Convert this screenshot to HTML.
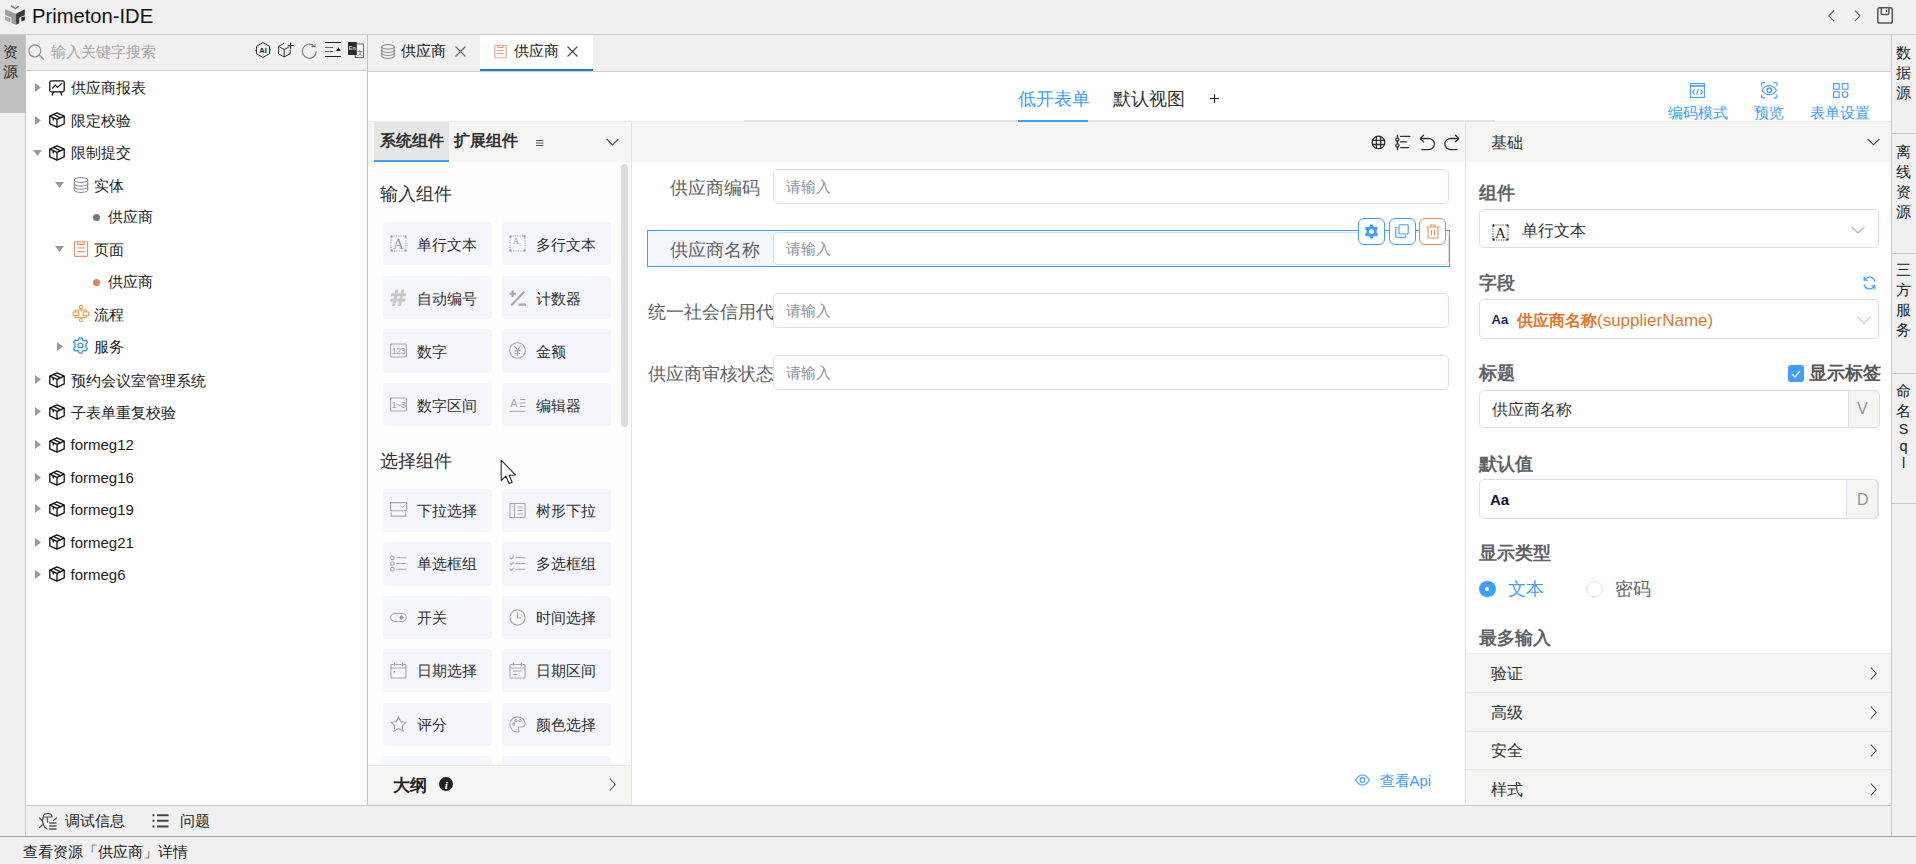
<!DOCTYPE html>
<html><head><meta charset="utf-8">
<style>
*{box-sizing:border-box;margin:0;padding:0}
html,body{width:1916px;height:864px;overflow:hidden;background:#f0f0f0;font-family:"Liberation Sans",sans-serif;color:#222;position:relative}
.a{position:absolute}
.t{position:absolute;white-space:nowrap;line-height:1}
svg{position:absolute;overflow:visible}
.lbl{font-size:17.5px;color:#606266}
.inp{width:676px;border:1px solid #dcdfe6;border-radius:5px;background:#fff}
.ph{font-size:15px;color:#8f9298}
.abtn{width:26.7px;height:26.7px;border:1px solid #409eff;border-radius:6px;background:#fff}
.plbl{font-size:17.5px;font-weight:bold;color:#606266}
.sel{width:400px;border:1px solid #dcdfe6;border-radius:5px;background:#fff}
.addon{width:32px;border:1px solid #dcdfe6;border-radius:0 5px 5px 0;background:#f5f5f4}
.crow{font-size:16.25px;color:#333}
.hbtn{font-size:15px;color:#409eff}
.vtx{left:1891.5px;width:24px;text-align:center;font-size:15px;line-height:20px;color:#222}
.card{width:109px;height:43.3px;background:#f5f6fc;border-radius:4px}
</style></head><body>

<svg width="0" height="0" style="position:absolute">
<defs>
<symbol id="i-chart" viewBox="0 0 16 16"><g fill="none" stroke="#111" stroke-width="1.3"><rect x="0.8" y="0.8" width="14.4" height="11" rx="1.5"/><path d="M3.2 8.6L6.3 5.2L8.6 7.4L12.6 3.4"/><path d="M4.3 11.8L3.2 15.5M11.7 11.8L12.8 15.5"/></g></symbol>
<symbol id="i-cube" viewBox="0 0 16 16"><g fill="none" stroke="#111" stroke-width="1.3" stroke-linejoin="round"><path d="M8 0.8L15.2 4.1V11.9L8 15.2L0.8 11.9V4.1Z"/><path d="M0.8 4.1L8 7.4L15.2 4.1M8 7.4V15.2"/><path d="M4.4 2.4L11.6 5.8M4.2 6V8.6"/></g></symbol>
<symbol id="i-db" viewBox="0 0 16 17"><g fill="none" stroke="#777" stroke-width="1"><ellipse cx="8" cy="3.2" rx="7.2" ry="2.6"/><path d="M0.8 3.2V13.8C0.8 15.2 4 16.4 8 16.4C12 16.4 15.2 15.2 15.2 13.8V3.2"/><path d="M0.8 7C0.8 8.4 4 9.6 8 9.6C12 9.6 15.2 8.4 15.2 7M0.8 10.4C0.8 11.8 4 13 8 13C12 13 15.2 11.8 15.2 10.4"/></g></symbol>
<symbol id="i-page" viewBox="0 0 16 17"><g fill="none" stroke="#e8906a" stroke-width="1.2"><rect x="1" y="0.8" width="14" height="15.6" rx="1.2"/><path d="M4.5 0.8V3.6H11.5V0.8"/><path d="M4 7.4H12M4 11.2H12"/></g></symbol>
<symbol id="i-flow" viewBox="0 0 16 17"><g fill="none" stroke="#e8a35a" stroke-width="1.2"><circle cx="8" cy="2.1" r="1.5"/><circle cx="8" cy="15" r="1.5"/><path d="M8 3.6V5.2M8 11.8V13.5"/><path d="M3 5.2H13V11.8H3Z"/><path d="M0.6 7.6H5.2V10.3H0.6ZM10.8 7.6H15.4V10.3H10.8Z" fill="#fff"/></g></symbol>
<symbol id="i-gear" viewBox="0 0 16 16"><g fill="none" stroke="#3a8ef0" stroke-width="1.2" stroke-linejoin="round"><path d="M6.7 0.8H9.3L9.8 2.7L11.3 3.5L13.2 2.9L14.5 5.1L13.1 6.5V9.5L14.5 10.9L13.2 13.1L11.3 12.5L9.8 13.3L9.3 15.2H6.7L6.2 13.3L4.7 12.5L2.8 13.1L1.5 10.9L2.9 9.5V6.5L1.5 5.1L2.8 2.9L4.7 3.5L6.2 2.7Z"/><circle cx="8" cy="8" r="2.3"/></g></symbol>
</defs></svg>
<!-- title bar -->
<div class="a" style="left:0;top:0;width:1916px;height:34px;background:#f0f0f0"></div>
<div class="a" style="left:0;top:34px;width:1916px;height:1px;background:#cdcdcd"></div>
<div class="t" style="left:32px;top:5.5px;font-size:20.2px;color:#111">Primeton-IDE</div>

<!-- left strip -->
<div class="a" style="left:0;top:35px;width:25px;height:78px;background:#bebebe"></div>
<div class="a" style="left:25px;top:35px;width:1px;height:801px;background:#c8c8c8"></div>
<div class="t" style="left:2.5px;top:42px;font-size:15px;line-height:20px;width:16px;white-space:normal">资源</div>

<!-- left panel -->
<div class="a" style="left:26px;top:70px;width:341px;height:1px;background:#cdcdcd"></div>
<div class="a" style="left:26px;top:71px;width:341px;height:734px;background:#fff"></div>
<div class="a" style="left:367px;top:35px;width:1px;height:770px;background:#c3c3c3"></div>
<div class="t" style="left:51px;top:44px;font-size:15px;color:#a6a6a6">输入关键字搜索</div>
<!-- tree -->
<svg style="left:35px;top:82.9px" width="6" height="9"><path d="M0 0L6 4.5L0 9Z" fill="#999"/></svg>
<svg style="left:49px;top:79.5px" width="16" height="16"><use href="#i-chart"/></svg>
<div class="t" style="left:70.5px;top:80.0px;font-size:15px">供应商报表</div>
<svg style="left:35px;top:115.8px" width="6" height="9"><path d="M0 0L6 4.5L0 9Z" fill="#999"/></svg>
<svg style="left:49px;top:112.4px" width="16" height="16"><use href="#i-cube"/></svg>
<div class="t" style="left:70.5px;top:112.9px;font-size:15px">限定校验</div>
<svg style="left:33.2px;top:149.8px" width="9" height="6"><path d="M0 0L9 0L4.5 6Z" fill="#999"/></svg>
<svg style="left:49px;top:144.8px" width="16" height="16"><use href="#i-cube"/></svg>
<div class="t" style="left:70.5px;top:145.3px;font-size:15px">限制提交</div>
<svg style="left:55.2px;top:182.2px" width="9" height="6"><path d="M0 0L9 0L4.5 6Z" fill="#999"/></svg>
<svg style="left:73px;top:177.2px" width="16" height="16"><use href="#i-db"/></svg>
<div class="t" style="left:93.8px;top:177.7px;font-size:15px">实体</div>
<div class="a" style="left:93px;top:214.0px;width:7px;height:7px;border-radius:50%;background:#777"></div>
<div class="t" style="left:108.3px;top:208.8px;font-size:15px">供应商</div>
<svg style="left:55.2px;top:246.4px" width="9" height="6"><path d="M0 0L9 0L4.5 6Z" fill="#999"/></svg>
<svg style="left:73px;top:241.4px" width="16" height="16"><use href="#i-page"/></svg>
<div class="t" style="left:93.8px;top:241.9px;font-size:15px">页面</div>
<div class="a" style="left:93px;top:279.3px;width:7px;height:7px;border-radius:50%;background:#e0845c"></div>
<div class="t" style="left:108.3px;top:274.3px;font-size:15px">供应商</div>
<svg style="left:72px;top:304px" width="18" height="19"><g fill="none" stroke="#e8a050" stroke-width="1.1"><circle cx="8.9" cy="3" r="1.6"/><circle cx="8.9" cy="16.3" r="1.5"/><path d="M8.9 4.6V6.1M8.9 13.5V14.8"/><rect x="3.2" y="6.1" width="11.1" height="7.4"/><rect x="1.2" y="8" width="5.5" height="3.5" fill="#fff"/><rect x="11.2" y="8" width="5.6" height="3.5" fill="#fff"/></g></svg>
<div class="t" style="left:93.8px;top:307.2px;font-size:15px">流程</div>
<svg style="left:57.3px;top:341.5px" width="6" height="9"><path d="M0 0L6 4.5L0 9Z" fill="#999"/></svg>
<svg style="left:72px;top:337px" width="17" height="17" viewBox="0 0 16 16"><use href="#i-gear"/></svg>
<div class="t" style="left:93.8px;top:338.6px;font-size:15px">服务</div>
<svg style="left:35px;top:375.4px" width="6" height="9"><path d="M0 0L6 4.5L0 9Z" fill="#999"/></svg>
<svg style="left:49px;top:372.0px" width="16" height="16"><use href="#i-cube"/></svg>
<div class="t" style="left:70.5px;top:372.5px;font-size:15px">预约会议室管理系统</div>
<svg style="left:35px;top:407.4px" width="6" height="9"><path d="M0 0L6 4.5L0 9Z" fill="#999"/></svg>
<svg style="left:49px;top:404.0px" width="16" height="16"><use href="#i-cube"/></svg>
<div class="t" style="left:70.5px;top:404.5px;font-size:15px">子表单重复校验</div>
<svg style="left:35px;top:440.1px" width="6" height="9"><path d="M0 0L6 4.5L0 9Z" fill="#999"/></svg>
<svg style="left:49px;top:436.7px" width="16" height="16"><use href="#i-cube"/></svg>
<div class="t" style="left:70.5px;top:437.2px;font-size:15px">formeg12</div>
<svg style="left:35px;top:473.0px" width="6" height="9"><path d="M0 0L6 4.5L0 9Z" fill="#999"/></svg>
<svg style="left:49px;top:469.6px" width="16" height="16"><use href="#i-cube"/></svg>
<div class="t" style="left:70.5px;top:470.1px;font-size:15px">formeg16</div>
<svg style="left:35px;top:504.4px" width="6" height="9"><path d="M0 0L6 4.5L0 9Z" fill="#999"/></svg>
<svg style="left:49px;top:501.0px" width="16" height="16"><use href="#i-cube"/></svg>
<div class="t" style="left:70.5px;top:501.5px;font-size:15px">formeg19</div>
<svg style="left:35px;top:537.8px" width="6" height="9"><path d="M0 0L6 4.5L0 9Z" fill="#999"/></svg>
<svg style="left:49px;top:534.4px" width="16" height="16"><use href="#i-cube"/></svg>
<div class="t" style="left:70.5px;top:534.9px;font-size:15px">formeg21</div>
<svg style="left:35px;top:569.6px" width="6" height="9"><path d="M0 0L6 4.5L0 9Z" fill="#999"/></svg>
<svg style="left:49px;top:566.2px" width="16" height="16"><use href="#i-cube"/></svg>
<div class="t" style="left:70.5px;top:566.7px;font-size:15px">formeg6</div>
<!-- /tree -->

<!-- tabs bar -->
<div class="a" style="left:368px;top:71px;width:1523px;height:1px;background:#cfcfcf"></div>
<div class="a" style="left:480px;top:35px;width:113px;height:36px;background:#fff"></div>
<div class="a" style="left:480px;top:69px;width:113px;height:2px;background:#1a7dd0"></div>
<div class="t" style="left:401px;top:43px;font-size:15px">供应商</div>
<div class="t" style="left:514px;top:43px;font-size:15px">供应商</div>

<!-- form header -->
<div class="a" style="left:368px;top:72px;width:1523px;height:50px;background:#fff"></div>
<div class="a" style="left:368px;top:121px;width:1523px;height:1px;background:#eeeaea"></div>
<div class="a" style="left:743.5px;top:120px;width:751.5px;height:2px;background:#e2e5ee"></div>
<div class="a" style="left:1018px;top:120px;width:70px;height:2px;background:#409eff"></div>
<div class="t" style="left:1018px;top:89.5px;font-size:18px;color:#409eff">低开表单</div>
<div class="t" style="left:1113px;top:89.5px;font-size:18px;color:#303133">默认视图</div>

<!-- component panel -->
<div class="a" style="left:368px;top:122px;width:263px;height:683px;background:#fefefe"></div>
<div class="a" style="left:368px;top:122px;width:263px;height:40px;background:#f5f5f3"></div>
<div class="a" style="left:374px;top:122px;width:75px;height:40px;background:#e6e6e6"></div>
<div class="a" style="left:374px;top:160px;width:75px;height:2px;background:#409eff"></div>
<div class="a" style="left:631px;top:122px;width:1px;height:683px;background:#e4e4e4"></div>
<div class="t" style="left:380px;top:133px;font-size:16px;font-weight:bold;color:#303133">系统组件</div>
<div class="t" style="left:454px;top:133px;font-size:16px;font-weight:bold;color:#303133">扩展组件</div>

<div class="t" style="left:380px;top:185px;font-size:18px;color:#303133">输入组件</div>
<div class="t" style="left:380px;top:451.5px;font-size:18px;color:#303133">选择组件</div>
<div class="a card" style="left:383px;top:222.0px"></div>
<svg style="left:390px;top:235.0px" width="17" height="17" viewBox="0 0 17 17"><rect x="1" y="1" width="15" height="15" fill="none" stroke="#a8a8a8" stroke-width="1.1" stroke-dasharray="1.2 1.2"/><path d="M0.5 0.5h2v2h-2zM14.5 0.5h2v2h-2zM0.5 14.5h2v2h-2zM14.5 14.5h2v2h-2z" fill="#999"/><text x="8.5" y="14.2" font-family="Liberation Serif" font-size="15" fill="#999" text-anchor="middle">A</text></svg>
<div class="t" style="left:417px;top:237.0px;font-size:15px;color:#303133">单行文本</div>
<div class="a card" style="left:502px;top:222.0px"></div>
<svg style="left:509px;top:235.0px" width="17" height="17" viewBox="0 0 17 17"><rect x="1" y="1" width="15" height="15" fill="none" stroke="#a8a8a8" stroke-width="1.1" stroke-dasharray="1.2 1.2"/><path d="M0.5 0.5h2v2h-2zM14.5 0.5h2v2h-2zM0.5 14.5h2v2h-2zM14.5 14.5h2v2h-2z" fill="#999"/><text x="7" y="9.2" font-family="Liberation Serif" font-size="9" fill="#999" text-anchor="middle">A</text></svg>
<div class="t" style="left:536px;top:237.0px;font-size:15px;color:#303133">多行文本</div>
<div class="a card" style="left:383px;top:275.7px"></div>
<svg style="left:390px;top:288.7px" width="17" height="17" viewBox="0 0 17 17"><path fill="#c8c8c8" d="M5.6 0.5H8.6L5.1 17H2.1ZM11.4 0.5H14.4L10.9 17H7.9ZM1.4 4.3H16.6L16 7.3H0.8ZM0.6 9.6H15.8L15.2 12.6H0Z"/></svg>
<div class="t" style="left:417px;top:290.7px;font-size:15px;color:#303133">自动编号</div>
<div class="a card" style="left:502px;top:275.7px"></div>
<svg style="left:509px;top:288.7px" width="17" height="17" viewBox="0 0 17 17"><path d="M0.5 4.8H6.8M3.6 1.6V8M2.2 16.5L15.2 2.8M9.6 15.6H17" stroke="#a8a8a8" stroke-width="2.1" fill="none"/></svg>
<div class="t" style="left:536px;top:290.7px;font-size:15px;color:#303133">计数器</div>
<div class="a card" style="left:383px;top:329.4px"></div>
<svg style="left:390px;top:342.4px" width="17" height="17" viewBox="0 0 17 17"><rect x="0.6" y="2" width="15.8" height="13" rx="1" fill="none" stroke="#a8a8a8" stroke-width="1.1"/><text x="8.5" y="12" font-family="Liberation Sans" font-size="9" fill="#a0a0a0" text-anchor="middle" letter-spacing="-0.3">123</text></svg>
<div class="t" style="left:417px;top:344.4px;font-size:15px;color:#303133">数字</div>
<div class="a card" style="left:502px;top:329.4px"></div>
<svg style="left:509px;top:342.4px" width="17" height="17" viewBox="0 0 17 17"><circle cx="8.5" cy="8.5" r="7.8" fill="none" stroke="#a8a8a8" stroke-width="1.1"/><path d="M5.4 3.8L8.5 8.2L11.6 3.8M8.5 8.2V13.6M5.6 8.9H11.4M5.6 11.2H11.4" fill="none" stroke="#a8a8a8" stroke-width="1.1"/></svg>
<div class="t" style="left:536px;top:344.4px;font-size:15px;color:#303133">金额</div>
<div class="a card" style="left:383px;top:383.1px"></div>
<svg style="left:390px;top:396.1px" width="17" height="17" viewBox="0 0 17 17"><rect x="0.6" y="2" width="15.8" height="13" rx="1" fill="none" stroke="#a8a8a8" stroke-width="1.1"/><text x="8.5" y="12" font-family="Liberation Sans" font-size="9" fill="#a0a0a0" text-anchor="middle" letter-spacing="-0.5">1~3</text></svg>
<div class="t" style="left:417px;top:398.1px;font-size:15px;color:#303133">数字区间</div>
<div class="a card" style="left:502px;top:383.1px"></div>
<svg style="left:509px;top:396.1px" width="17" height="17" viewBox="0 0 17 17"><text x="5" y="11" font-family="Liberation Sans" font-size="11" fill="#aaa" text-anchor="middle">A</text><path d="M0.5 15.2H16.5M11 3.5h5.5M11 7h5.5M11 10.5h5.5" fill="none" stroke="#a8a8a8" stroke-width="1.1"/></svg>
<div class="t" style="left:536px;top:398.1px;font-size:15px;color:#303133">编辑器</div>
<div class="a card" style="left:383px;top:489.0px"></div>
<svg style="left:390px;top:502.0px" width="17" height="17" viewBox="0 0 17 17"><path d="M0.6 0.6h16v8.2H0.6z" fill="none" stroke="#a8a8a8" stroke-width="1.1"/><path d="M10.5 3.6l1.8 1.8l1.8-1.8" fill="none" stroke="#a8a8a8" stroke-width="1"/><path d="M1.2 10.5v3.6h14.6v-3.6" fill="none" stroke="#a8a8a8" stroke-width="1.1"/></svg>
<div class="t" style="left:417px;top:503.0px;font-size:15px;color:#303133">下拉选择</div>
<div class="a card" style="left:502px;top:489.0px"></div>
<svg style="left:509px;top:502.0px" width="17" height="17" viewBox="0 0 17 17"><rect x="1" y="1.5" width="15" height="14" fill="none" stroke="#a8a8a8" stroke-width="1.1"/><path d="M5.5 1.5v14M8.5 5h5M8.5 8.5h5M8.5 12h5M2.8 4.5h1" fill="none" stroke="#a8a8a8" stroke-width="1.1"/></svg>
<div class="t" style="left:536px;top:503.0px;font-size:15px;color:#303133">树形下拉</div>
<div class="a card" style="left:383px;top:542.4px"></div>
<svg style="left:390px;top:555.4px" width="17" height="17" viewBox="0 0 17 17"><circle cx="2.5" cy="2.8" r="1.8" fill="none" stroke="#a8a8a8" stroke-width="1.1"/><circle cx="2.5" cy="8.5" r="1.8" fill="none" stroke="#a8a8a8" stroke-width="1.1"/><circle cx="2.5" cy="14.2" r="1.8" fill="none" stroke="#a8a8a8" stroke-width="1.1"/><path d="M6.5 2.8H16.5M6.5 8.5H16.5M6.5 14.2H16.5" fill="none" stroke="#a8a8a8" stroke-width="1.1"/></svg>
<div class="t" style="left:417px;top:556.4px;font-size:15px;color:#303133">单选框组</div>
<div class="a card" style="left:502px;top:542.4px"></div>
<svg style="left:509px;top:555.4px" width="17" height="17" viewBox="0 0 17 17"><path d="M0.8 2.5l1.5 1.5l2.5-2.5M0.8 8.2l1.5 1.5l2.5-2.5M0.8 13.9l1.5 1.5l2.5-2.5" fill="none" stroke="#a8a8a8" stroke-width="1.1"/><path d="M6.5 2.8H16.5M6.5 8.5H16.5M6.5 14.2H16.5" fill="none" stroke="#a8a8a8" stroke-width="1.1"/></svg>
<div class="t" style="left:536px;top:556.4px;font-size:15px;color:#303133">多选框组</div>
<div class="a card" style="left:383px;top:595.8px"></div>
<svg style="left:390px;top:608.8px" width="17" height="17" viewBox="0 0 17 17"><rect x="0.8" y="4.5" width="15.4" height="8" rx="4" fill="none" stroke="#a8a8a8" stroke-width="1.1"/><circle cx="11.5" cy="8.5" r="2" fill="#999"/></svg>
<div class="t" style="left:417px;top:609.8px;font-size:15px;color:#303133">开关</div>
<div class="a card" style="left:502px;top:595.8px"></div>
<svg style="left:509px;top:608.8px" width="17" height="17" viewBox="0 0 17 17"><circle cx="8.5" cy="8.5" r="7.6" fill="none" stroke="#a8a8a8" stroke-width="1.1"/><path d="M8.5 3.5V9H12" fill="none" stroke="#a8a8a8" stroke-width="1.1"/></svg>
<div class="t" style="left:536px;top:609.8px;font-size:15px;color:#303133">时间选择</div>
<div class="a card" style="left:383px;top:649.2px"></div>
<svg style="left:390px;top:662.2px" width="17" height="17" viewBox="0 0 17 17"><rect x="1" y="2.5" width="15" height="13.5" rx="0.8" fill="none" stroke="#a8a8a8" stroke-width="1.1"/><path d="M1 6H16M4.5 0.8V4M12.5 0.8V4" fill="none" stroke="#a8a8a8" stroke-width="1.1"/><rect x="3.5" y="9" width="1.6" height="1.6" fill="#aaa"/></svg>
<div class="t" style="left:417px;top:663.2px;font-size:15px;color:#303133">日期选择</div>
<div class="a card" style="left:502px;top:649.2px"></div>
<svg style="left:509px;top:662.2px" width="17" height="17" viewBox="0 0 17 17"><rect x="1" y="2.5" width="15" height="13.5" rx="0.8" fill="none" stroke="#a8a8a8" stroke-width="1.1"/><path d="M1 6H16M4.5 0.8V4M12.5 0.8V4M4 9H13M4 12.5H8.5" fill="none" stroke="#a8a8a8" stroke-width="1.1"/></svg>
<div class="t" style="left:536px;top:663.2px;font-size:15px;color:#303133">日期区间</div>
<div class="a card" style="left:383px;top:702.6px"></div>
<svg style="left:390px;top:715.6px" width="17" height="17" viewBox="0 0 17 17"><path d="M8.5 0.9L10.8 5.8L16 6.4L12.1 9.9L13.2 15.2L8.5 12.5L3.8 15.2L4.9 9.9L1 6.4L6.2 5.8Z" fill="none" stroke="#a8a8a8" stroke-width="1.1" stroke-linejoin="round"/></svg>
<div class="t" style="left:417px;top:716.6px;font-size:15px;color:#303133">评分</div>
<div class="a card" style="left:502px;top:702.6px"></div>
<svg style="left:509px;top:715.6px" width="17" height="17" viewBox="0 0 17 17"><path d="M8.5 0.9C4.2 0.9 0.9 4.2 0.9 8.3C0.9 12.6 4.5 16.1 8.6 16.1C9.6 16.1 10.1 15.5 10.1 14.7C10.1 13.7 9.3 13.4 9.3 12.5C9.3 11.6 10 11 10.9 11H12.7C14.7 11 16.1 9.6 16.1 7.6C16.1 3.8 12.7 0.9 8.5 0.9Z" fill="none" stroke="#a8a8a8" stroke-width="1.1"/><circle cx="4.8" cy="8" r="1.1" fill="none" stroke="#a8a8a8" stroke-width="1.1"/><circle cx="7" cy="4.6" r="1.1" fill="none" stroke="#a8a8a8" stroke-width="1.1"/><circle cx="11" cy="4.6" r="1.1" fill="none" stroke="#a8a8a8" stroke-width="1.1"/></svg>
<div class="t" style="left:536px;top:716.6px;font-size:15px;color:#303133">颜色选择</div>
<div class="a card" style="left:383px;top:756.0px"></div>
<div class="a card" style="left:502px;top:756.0px"></div>
<div class="a" style="left:621px;top:164px;width:7px;height:263px;border-radius:4px;background:#dcdde0"></div>
<svg style="left:535.5px;top:140px" width="8" height="6"><path d="M0 0.5H7.5M0 3H7.5M0 5.5H7.5" stroke="#444" stroke-width="0.9"/></svg>
<svg style="left:605.5px;top:138px" width="13" height="8"><path d="M0.5 0.8L6.5 6.8L12.5 0.8" fill="none" stroke="#555" stroke-width="1.2"/></svg>
<div class="a" style="left:368px;top:765px;width:263px;height:40px;background:#f5f5f3;border-top:1px solid #e8eaf0;border-bottom:1px solid #e8eaf0"></div>
<div class="t" style="left:393px;top:777px;font-size:17px;font-weight:bold;color:#222">大纲</div>
<svg style="left:439px;top:777px" width="14" height="14"><circle cx="7" cy="7" r="7" fill="#222"/><text x="7.3" y="11.5" font-family="Liberation Serif" font-style="italic" font-weight="bold" font-size="11" fill="#fff" text-anchor="middle">i</text></svg>
<svg style="left:609px;top:778px" width="7" height="13"><path d="M0.8 0.5L6.2 6.5L0.8 12.5" fill="none" stroke="#555" stroke-width="1.1"/></svg>

<!-- canvas -->
<div class="a" style="left:632px;top:122px;width:833px;height:683px;background:#fff"></div>
<div class="a" style="left:632px;top:122px;width:833px;height:40px;background:#f5f5f3"></div>
<div class="a" style="left:1465px;top:122px;width:1px;height:683px;background:#e4e4e4"></div>


<!-- canvas toolbar icons -->
<svg style="left:1365px;top:130px" width="100" height="26" viewBox="0 0 100 26"><g fill="none" stroke="#333" stroke-width="1.3" stroke-linecap="round" stroke-linejoin="round">
<circle cx="13.5" cy="12.4" r="6.3"/><path d="M7.4 10.3H19.6M7.4 14.5H19.6M11.4 6.4V18.4M15.6 6.4V18.4"/>
<path d="M32.4 5.2V19.8"/><circle cx="32.4" cy="9.4" r="1.6" fill="#f5f5f3"/><circle cx="32.4" cy="15.4" r="1.6" fill="#f5f5f3"/>
<path d="M35.5 6.4H44.8M35.5 11.9H41.2M35.5 17.6H43.6"/>
<path d="M58.5 5.2L55.3 8.5L58.5 11.7"/><path d="M55.5 8.5H63.5C66.8 8.5 69.5 11 69.5 14.1C69.5 17.2 66.8 19.6 63.5 19.6H56.8"/>
<path d="M90.5 5.2L93.7 8.5L90.5 11.7"/><path d="M93.5 8.5H85.8C82.5 8.5 79.8 11 79.8 14.1C79.8 17.2 82.5 19.6 85.8 19.6H92.2"/>
</g></svg>

<!-- fields -->
<div class="t lbl" style="left:670px;top:179.5px">供应商编码</div>
<div class="a inp" style="left:773px;top:169px;height:34.5px"></div>
<div class="t ph" style="left:786px;top:179px">请输入</div>

<div class="a" style="left:647px;top:230px;width:803px;height:37px;border:1px solid #409eff;background:#f4f6fd"></div>
<div class="t lbl" style="left:670px;top:242px">供应商名称</div>
<div class="a inp" style="left:773px;top:231.7px;height:33.8px"></div>
<div class="t ph" style="left:786px;top:241px">请输入</div>

<div class="t lbl" style="left:648px;top:304px">统一社会信用代码</div>
<div class="a inp" style="left:773px;top:293.2px;height:34.4px"></div>
<div class="t ph" style="left:786px;top:303px">请输入</div>

<div class="t lbl" style="left:648px;top:366px">供应商审核状态</div>
<div class="a inp" style="left:773px;top:355px;height:34.7px"></div>
<div class="t ph" style="left:786px;top:365px">请输入</div>

<!-- action buttons -->
<div class="a abtn" style="left:1358px;top:218px"></div>
<div class="a abtn" style="left:1389px;top:218px"></div>
<div class="a abtn" style="left:1419.2px;top:218px;border-color:#e0885a"></div>
<svg style="left:1364px;top:223.5px" width="15" height="15" viewBox="0 0 16 16"><path fill="#409eff" fill-rule="evenodd" d="M6.6 0.5H9.4L9.9 2.6L11.6 3.5L13.6 2.8L15 5.2L13.5 6.6V9.4L15 10.8L13.6 13.2L11.6 12.5L9.9 13.4L9.4 15.5H6.6L6.1 13.4L4.4 12.5L2.4 13.2L1 10.8L2.5 9.4V6.6L1 5.2L2.4 2.8L4.4 3.5L6.1 2.6ZM8 5.3A2.7 2.7 0 1 0 8 10.7A2.7 2.7 0 1 0 8 5.3Z"/></svg>
<svg style="left:1395px;top:224px" width="14" height="14" viewBox="0 0 14 14"><g fill="none" stroke="#409eff" stroke-width="1.1"><rect x="4" y="0.8" width="9.2" height="9.2" rx="1"/><path d="M2.5 3.5H0.8V13.2H10.5V11.5"/></g></svg>
<svg style="left:1425.5px;top:223.5px" width="14" height="15" viewBox="0 0 14 15"><g fill="none" stroke="#e8915f" stroke-width="1.1"><path d="M0.5 3H13.5M4.8 3V1H9.2V3M2 3V14H12V3M5.5 6V11.5M8.5 6V11.5"/></g></svg>

<!-- api link -->
<svg style="left:1355px;top:774px" width="15" height="12" viewBox="0 0 15 12"><g fill="none" stroke="#409eff" stroke-width="1.1"><path d="M0.7 6C2.5 2.8 4.8 1 7.5 1C10.2 1 12.5 2.8 14.3 6C12.5 9.2 10.2 11 7.5 11C4.8 11 2.5 9.2 0.7 6Z"/><circle cx="7.5" cy="6" r="2.4"/></g></svg>
<div class="t" style="left:1379.5px;top:772.5px;font-size:15px;color:#409eff">查看Api</div>

<!-- props panel -->
<div class="a" style="left:1466px;top:122px;width:425px;height:683px;background:#fff"></div>
<div class="a" style="left:1466px;top:122px;width:425px;height:40px;background:#f5f5f3"></div>


<div class="t" style="left:1491px;top:134px;font-size:16.25px;color:#333">基础</div>
<svg style="left:1867px;top:138px" width="13" height="8"><path d="M0.5 0.8L6.5 6.8L12.5 0.8" fill="none" stroke="#444" stroke-width="1.1"/></svg>

<div class="t plbl" style="left:1479px;top:185px">组件</div>
<div class="a sel" style="left:1479px;top:209.4px;height:39.1px"></div>
<svg style="left:1492px;top:224px" width="17" height="17" viewBox="0 0 17 17"><rect x="1" y="1" width="15" height="15" fill="none" stroke="#444" stroke-width="1" stroke-dasharray="1.2 1.2"/><path d="M0.5 0.5h2v2h-2zM14.5 0.5h2v2h-2zM0.5 14.5h2v2h-2zM14.5 14.5h2v2h-2z" fill="#222"/><text x="8.5" y="14.3" font-family="Liberation Serif" font-size="15" fill="#222" text-anchor="middle">A</text></svg>
<div class="t" style="left:1522px;top:221.8px;font-size:16.25px;color:#333">单行文本</div>
<svg style="left:1851px;top:226px" width="14" height="8"><path d="M0.5 0.8L7 7L13.5 0.8" fill="none" stroke="#a8abb2" stroke-width="1.1"/></svg>

<div class="t plbl" style="left:1479px;top:275px">字段</div>
<svg style="left:1862px;top:275.5px" width="15" height="14" viewBox="0 0 15 14"><g fill="none" stroke="#409eff" stroke-width="1.3"><path d="M13 5.5A5.8 5.8 0 0 0 2.5 3.8M2 8.5A5.8 5.8 0 0 0 12.5 10.2"/><path d="M2.2 0.8V4.2H5.6M12.8 13.2V9.8H9.4"/></g></svg>
<div class="a sel" style="left:1479px;top:299.2px;height:39.8px"></div>
<div class="t" style="left:1491.5px;top:313px;font-size:13px;font-weight:bold;color:#1d1d5c">Aa</div>
<div class="t" style="left:1517px;top:311.5px;font-size:16.25px;font-weight:bold;color:#e6772e">供应商名称<span style="font-weight:normal;font-size:17px">(supplierName)</span></div>
<svg style="left:1857px;top:315.5px" width="14" height="8"><path d="M0.5 0.8L7 7L13.5 0.8" fill="none" stroke="#c0c4cc" stroke-width="1.1"/></svg>

<div class="t plbl" style="left:1479px;top:365px">标题</div>
<div class="a" style="left:1787.5px;top:365.3px;width:16.3px;height:16.3px;border-radius:3px;background:#409eff"></div>
<svg style="left:1790.5px;top:369.5px" width="10" height="8"><path d="M1 4L4 7L9 1" fill="none" stroke="#fff" stroke-width="1.3"/></svg>
<div class="t plbl" style="left:1809px;top:365px;color:#555">显示标签</div>
<div class="a sel" style="left:1479px;top:389.7px;height:38.3px"></div>
<div class="a addon" style="left:1847.5px;top:389.7px;height:38.3px"></div>
<div class="t" style="left:1491.5px;top:401px;font-size:16.25px;color:#333">供应商名称</div>
<div class="t" style="left:1857px;top:401px;font-size:16px;color:#909399">V</div>

<div class="t plbl" style="left:1479px;top:456px">默认值</div>
<div class="a sel" style="left:1479px;top:479.4px;height:39.4px"></div>
<div class="a addon" style="left:1846px;top:479.4px;height:39.4px"></div>
<div class="t" style="left:1490px;top:491.5px;font-size:15px;font-weight:bold;color:#111133">Aa</div>
<div class="t" style="left:1857px;top:491.5px;font-size:16px;color:#909399">D</div>

<div class="t plbl" style="left:1479px;top:545px">显示类型</div>
<div class="a" style="left:1479px;top:580.5px;width:16.5px;height:16.5px;border-radius:50%;background:#409eff"></div>
<div class="a" style="left:1485.25px;top:586.75px;width:4px;height:4px;border-radius:50%;background:#fff"></div>
<div class="t" style="left:1508px;top:581px;font-size:17.5px;color:#409eff">文本</div>
<div class="a" style="left:1586px;top:580.5px;width:16.5px;height:16.5px;border-radius:50%;border:1px solid #dcdfe6;background:#fff"></div>
<div class="t" style="left:1615px;top:581px;font-size:17.5px;color:#606266">密码</div>

<div class="t plbl" style="left:1479px;top:630px">最多输入</div>

<div class="a" style="left:1466px;top:653px;width:425px;height:152px;background:#f5f5f3;border-top:1px solid #e6e9f0"></div>
<div class="a" style="left:1466px;top:692px;width:425px;height:1px;background:#e6e9f0"></div>
<div class="a" style="left:1466px;top:730.5px;width:425px;height:1px;background:#e6e9f0"></div>
<div class="a" style="left:1466px;top:769px;width:425px;height:1px;background:#e6e9f0"></div>
<div class="t crow" style="left:1491px;top:665px">验证</div>
<div class="t crow" style="left:1491px;top:703.5px">高级</div>
<div class="t crow" style="left:1491px;top:742px">安全</div>
<div class="t crow" style="left:1491px;top:780.5px">样式</div>
<svg style="left:1870px;top:667px" width="7" height="13"><path d="M0.8 0.5L6.2 6.5L0.8 12.5" fill="none" stroke="#444" stroke-width="1.1"/></svg>
<svg style="left:1870px;top:705.5px" width="7" height="13"><path d="M0.8 0.5L6.2 6.5L0.8 12.5" fill="none" stroke="#444" stroke-width="1.1"/></svg>
<svg style="left:1870px;top:744px" width="7" height="13"><path d="M0.8 0.5L6.2 6.5L0.8 12.5" fill="none" stroke="#444" stroke-width="1.1"/></svg>
<svg style="left:1870px;top:782.5px" width="7" height="13"><path d="M0.8 0.5L6.2 6.5L0.8 12.5" fill="none" stroke="#444" stroke-width="1.1"/></svg>

<!-- right strip -->
<div class="a" style="left:1891px;top:35px;width:1px;height:801px;background:#c8c8c8"></div>

<!-- bottom bar -->
<div class="a" style="left:26px;top:805px;width:1865px;height:1px;background:#c8c8c8"></div>
<div class="a" style="left:0;top:836px;width:1916px;height:1px;background:#a0a0a0"></div>
<div class="t" style="left:65px;top:813px;font-size:15px">调试信息</div>
<div class="t" style="left:180px;top:813px;font-size:15px">问题</div>
<div class="t" style="left:23px;top:844px;font-size:15px">查看资源「供应商」详情</div>


<!-- logo -->
<svg style="left:0;top:0" width="30" height="30" viewBox="0 0 30 30">
<path d="M11 5.6L15.4 8.6L18.9 6.3" fill="none" stroke="#7a7a7a" stroke-width="1.6"/>
<path d="M5.1 9.3L16.1 13.8V24.8L11.4 22.9V17.4L5.1 15Z" fill="#9c9c9c"/>
<path d="M5.1 16.3L10.5 18.3V22.2L5.1 20.1Z" fill="#a6a6a6"/>
<path d="M16.1 13.8L24.8 9.3V15.3L19.3 17.4V22.9L16.1 24.8Z" fill="#3a3a3a"/>
<path d="M21.3 17.6L24.8 16.2V20.2L21.3 21.6Z" fill="#2a2a2a"/>
</svg>
<!-- top right -->
<svg style="left:1828px;top:9.5px" width="7" height="12"><path d="M6 0.5L0.8 5.8L6 11.2" fill="none" stroke="#666" stroke-width="1.1"/></svg>
<svg style="left:1853.5px;top:9.5px" width="7" height="12"><path d="M0.8 0.5L6 5.8L0.8 11.2" fill="none" stroke="#666" stroke-width="1.1"/></svg>
<svg style="left:1876.5px;top:7.2px" width="16" height="17" viewBox="0 0 16 17"><g fill="none" stroke="#555" stroke-width="1.5"><rect x="0.8" y="0.8" width="14.5" height="15.2" rx="1.8"/><path d="M4.3 0.8V6.2C4.3 7 4.8 7.6 5.6 7.6H10.6C11.4 7.6 11.9 7 11.9 6.2V0.8"/></g><path d="M9.6 3V5" stroke="#333" stroke-width="1.2"/></svg>

<!-- search row icons -->
<svg style="left:27.5px;top:43.5px" width="17" height="16" viewBox="0 0 17 16"><g fill="none" stroke="#8a8a8a" stroke-width="1.2"><circle cx="6.8" cy="6.8" r="6"/><path d="M11.2 11.2L16 15.5"/></g></svg>
<svg style="left:255px;top:42px" width="16" height="16" viewBox="0 0 16 16"><g fill="none" stroke="#333" stroke-width="1"><path d="M8 0.6L14.5 4.3V11.7L8 15.4L1.5 11.7V4.3Z"/></g><circle cx="1.2" cy="8.3" r="0.9" fill="#222"/><circle cx="14.8" cy="7.5" r="0.9" fill="#222"/><text x="8" y="10.8" font-family="Liberation Sans" font-weight="bold" font-size="7.5" fill="#222" text-anchor="middle">AI</text></svg>
<svg style="left:278px;top:42px" width="16" height="16" viewBox="0 0 16 16"><g fill="none" stroke="#333" stroke-width="1"><path d="M6.2 1.2L0.6 4.4V11.8L6.2 15L12.2 11.6V7.5M0.6 4.4L6.2 7.6L11.2 4.8M6.2 7.6V15"/><path d="M9.5 3.5H15.8M12.6 0.5V6.8" stroke-width="1.2"/></g></svg>
<svg style="left:300.5px;top:43px" width="17" height="16" viewBox="0 0 17 16"><g fill="none" stroke="#777" stroke-width="1.1"><path d="M15.3 8.2A7 7 0 1 1 13 3"/><path d="M14 0.8V3.6H10.5"/></g></svg>
<svg style="left:324px;top:41px" width="18" height="17" viewBox="0 0 18 17"><g stroke="#222" stroke-width="1.1"><path d="M1 1.5H17M1 15.5H17"/><path d="M1 6.5H9M1 10.5H9" stroke="#666"/></g><path d="M12 10L14.4 6.4L16.8 10Z" fill="#222"/></svg>
<svg style="left:348px;top:42px" width="16" height="16" viewBox="0 0 16 16"><rect x="7.2" y="2" width="8.2" height="13.6" fill="#fff" stroke="#555" stroke-width="0.9"/><rect x="0" y="0" width="8.8" height="13" rx="0.8" fill="#2b2b2b"/><text x="4.3" y="8.2" font-family="Liberation Sans" font-weight="bold" font-size="5.5" fill="#ddd" text-anchor="middle">En</text><text x="11.8" y="13" font-family="Liberation Sans" font-size="6" fill="#444" text-anchor="middle">文</text></svg>

<!-- tab icons -->
<svg style="left:380.5px;top:43.5px" width="14" height="15" viewBox="0 0 16 17"><use href="#i-db"/></svg>
<svg style="left:455px;top:45.5px" width="11" height="11"><path d="M0.5 0.5L10.5 10.5M10.5 0.5L0.5 10.5" stroke="#666" stroke-width="1.1"/></svg>
<svg style="left:494px;top:43.5px" width="13" height="15" viewBox="0 0 16 17"><use href="#i-page"/></svg>
<svg style="left:567px;top:45.5px" width="11" height="11"><path d="M0.5 0.5L10.5 10.5M10.5 0.5L0.5 10.5" stroke="#444" stroke-width="1.1"/></svg>

<!-- header plus & right icons -->
<svg style="left:1210px;top:94px" width="9" height="9"><path d="M0 4.5H9M4.5 0V9" stroke="#222" stroke-width="1.1"/></svg>
<svg style="left:1690px;top:82.8px" width="15" height="15" viewBox="0 0 15 15"><g fill="none" stroke="#409eff" stroke-width="1.1"><rect x="0.6" y="0.6" width="13.8" height="13.8"/><path d="M0.6 3H14.4" stroke-width="1.6"/><path d="M4.6 6.3L2.6 8.8L4.6 11.3M10.4 6.3L12.4 8.8L10.4 11.3M8.3 5.8L6.7 11.8"/></g></svg>
<svg style="left:1761px;top:82px" width="16.5" height="16.5" viewBox="0 0 16.5 16.5"><g fill="none" stroke="#409eff" stroke-width="1.1"><path d="M0.6 4V1.8Q0.6 0.6 1.8 0.6H4M12.5 0.6H14.7Q15.9 0.6 15.9 1.8V4M15.9 12.5V14.7Q15.9 15.9 14.7 15.9H12.5M4 15.9H1.8Q0.6 15.9 0.6 14.7V12.5"/><path d="M1 8.2C3 5 5.4 3.7 8.25 3.7C11.1 3.7 13.5 5 15.5 8.2C13.5 11.4 11.1 12.7 8.25 12.7C5.4 12.7 3 11.4 1 8.2Z" stroke-width="1.2"/><circle cx="8.25" cy="8.2" r="2.2" stroke-width="1.4"/></g></svg>
<svg style="left:1832.7px;top:82.8px" width="15.5" height="15" viewBox="0 0 15.5 15"><g fill="none" stroke="#409eff" stroke-width="1.1"><rect x="0.6" y="0.6" width="5.6" height="5.6"/><rect x="9.3" y="0.6" width="5.6" height="5.6"/><rect x="0.6" y="8.8" width="5.6" height="5.6"/><circle cx="12.1" cy="11.6" r="2.8"/></g></svg>
<div class="t hbtn" style="left:1668px;top:104.5px">编码模式</div>
<div class="t hbtn" style="left:1754px;top:104.5px">预览</div>
<div class="t hbtn" style="left:1810px;top:104.5px">表单设置</div>

<!-- right strip text -->
<div class="t vtx" style="top:42.5px">数<br>据<br>源</div>
<div class="a" style="left:1892px;top:133px;width:24px;height:1px;background:#c8c8c8"></div>
<div class="t vtx" style="top:142.3px">离<br>线<br>资<br>源</div>
<div class="a" style="left:1892px;top:252.5px;width:24px;height:1px;background:#c8c8c8"></div>
<div class="t vtx" style="top:260px">三<br>方<br>服<br>务</div>
<div class="a" style="left:1892px;top:372.5px;width:24px;height:1px;background:#c8c8c8"></div>
<div class="t vtx" style="top:381px">命<br>名<br><span style="font-size:14.5px;line-height:17px;display:block">S</span><span style="font-size:14.5px;line-height:17px;display:block">q</span><span style="font-size:14.5px;line-height:17px;display:block">l</span></div>
<div class="a" style="left:1892px;top:503px;width:24px;height:1px;background:#c8c8c8"></div>

<!-- bottom bar icons -->
<svg style="left:38px;top:811px" width="20" height="20" viewBox="0 0 20 20"><g fill="none" stroke="#555" stroke-width="1.2" stroke-linecap="round"><path d="M5.3 6C5.3 3.8 7.2 2.5 9.9 2.5C12.6 2.5 14.1 3.8 14.1 6M5 6H14.3M5.3 6C4.5 8 4.5 12 5.5 14C6.5 16.5 8 17.5 9 18M9.5 6V11M1.5 7L4.5 10M1.5 16.5L4.3 14M18.5 7L15.5 9.5"/><path d="M11.2 12H18.5M11.2 15H18.5M11.2 18H18.5" stroke-width="1.7" stroke-linecap="butt"/></g></svg>
<svg style="left:152px;top:814px" width="17" height="14" viewBox="0 0 17 14"><g stroke="#444" stroke-width="2"><path d="M0.5 1.2H2.5M0.5 6.8H2.5M0.5 12.6H2.5M5 1.2H16.5M5 6.8H16.5M5 12.6H16.5"/></g></svg>

<!-- cursor -->
<svg style="left:500.3px;top:459.3px" width="18" height="26" viewBox="0 0 18 26"><path d="M1.2 1.2V21.5L5.9 17.2L9.2 24.5L12.2 23.2L9.1 16.2L15.7 16.1Z" fill="#fff" stroke="#222" stroke-width="1.05" stroke-linejoin="round"/></svg>

</body></html>
